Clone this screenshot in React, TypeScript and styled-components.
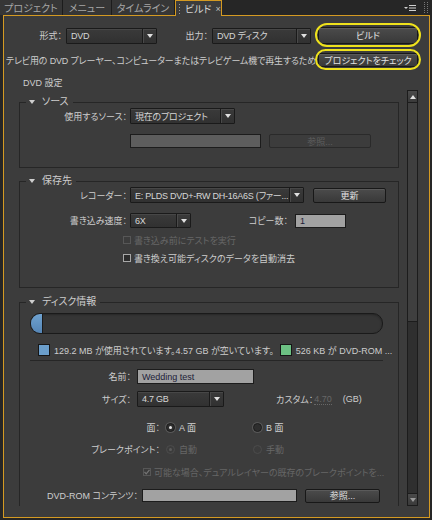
import React from 'react'
import styled, { createGlobalStyle, css } from 'styled-components'

const GlobalStyle = createGlobalStyle`
  html, body {
    margin: 0;
    padding: 0;
    background: #262626;
  }
  body {
    font-family: 'Liberation Sans', 'Noto Sans CJK JP', sans-serif;
    font-size: 9px;
    color: #cdcdcd;
    font-feature-settings: 'palt';
  }
`

const Window = styled.div`
  width: 432px;
  height: 520px;
  display: flex;
  flex-direction: column;
  background: #262626;
  overflow: hidden;
`

const TabBar = styled.div`
  height: 15px;
  display: flex;
  align-items: stretch;
  flex: none;
`

const Tab = styled.div<{ $w: number; $active?: boolean }>`
  width: ${(p) => p.$w}px;
  box-sizing: border-box;
  display: flex;
  align-items: center;
  justify-content: center;
  gap: 4px;
  background: #363636;
  border-right: 1px solid #1c1c1c;
  color: #a6a6a6;
  font-size: 10px;
  white-space: nowrap;

  ${(p) => p.$active && css`
    background: #3c3c3c;
    border: 1px solid #d49a22;
    border-bottom: none;
    margin-bottom: -1px;
    position: relative;
    z-index: 1;
    color: #d6d6d6;
    justify-content: flex-start;
    padding-left: 2px;
  `}
`

const TabClose = styled.span`
  color: #bdbdbd;
  font-size: 9px;
`

const TabSpacer = styled.div`
  flex: 1;
`

const TabTools = styled.div`
  display: flex;
  align-items: center;
  gap: 8px;
  padding-right: 4px;
`

const Panel = styled.div`
  margin: 0 2px 0 3px;
  height: 503px;
  box-sizing: border-box;
  border: 1px solid #d49a22;
  background: #3c3c3c;
  display: flex;
  flex-direction: column;
`

const TopRow = styled.div`
  display: flex;
  align-items: center;
  height: 17px;
  margin-top: 11px;
`

const DescRow = styled.div`
  display: flex;
  align-items: center;
  height: 16px;
  margin-top: 8px;
  padding-left: 2px;
`

const DescText = styled.span`
  flex: 1;
  min-width: 0;
  overflow: hidden;
  white-space: nowrap;
  letter-spacing: -0.15px;
`

const SectionTitle = styled.div`
  height: 12px;
  line-height: 12px;
  margin-top: 9px;
  padding-left: 19px;
`

const ScrollArea = styled.div`
  display: flex;
  height: 416px;
  margin-top: 1px;
`

const ScrollContent = styled.div`
  flex: 1;
  min-width: 0;
  overflow: hidden;
  padding: 6px 8px 0 15px;
`

const Scrollbar = styled.div`
  width: 11px;
  margin-right: 11px;
  box-sizing: border-box;
  border: 1px solid #1c1c1c;
  background: #2f2f2f;
  display: flex;
  flex-direction: column;
`

const ScrollButton = styled.div`
  height: 11px;
  flex: none;
  background: linear-gradient(#4a4a4a, #3a3a3a);
  display: flex;
  align-items: center;
  justify-content: center;
`

const ScrollThumb = styled.div`
  height: 220px;
  flex: none;
  box-sizing: border-box;
  background: #3f3f3f;
  border-top: 1px solid #1c1c1c;
  border-bottom: 1px solid #1c1c1c;
`

const ScrollTrack = styled.div`
  flex: 1;
  border-bottom: 1px solid #1c1c1c;
`

const Group = styled.fieldset<{ $mt?: number; $pb: number }>`
  margin: ${(p) => p.$mt ?? 0}px 0 0 0;
  padding: 0 0 ${(p) => p.$pb}px 0;
  border: 1px solid #262626;
  min-width: 0;
`

const GroupTitle = styled.legend`
  margin-left: 6px;
  padding: 0 4px 0 3px;
  height: 12px;
  line-height: 12px;
  font-size: 10px;
  white-space: nowrap;
`

const Caret = styled.span`
  display: inline-block;
  width: 0;
  height: 0;
  border-left: 3px solid transparent;
  border-right: 3px solid transparent;
  border-top: 4px solid #cfcfcf;
  margin-right: 7px;
  vertical-align: 1px;
`

const Row = styled.div<{ $mt?: number; $h: number; $pl?: number }>`
  display: flex;
  align-items: center;
  margin-top: ${(p) => p.$mt ?? 0}px;
  height: ${(p) => p.$h}px;
  padding-left: ${(p) => p.$pl ?? 0}px;
  white-space: nowrap;
`

const Label = styled.span<{ $w: number; $gap?: number; $ml?: number }>`
  width: ${(p) => p.$w}px;
  flex: none;
  text-align: right;
  margin-left: ${(p) => p.$ml ?? 0}px;
  margin-right: ${(p) => p.$gap ?? 3}px;
  white-space: nowrap;
`

const Select = styled.div<{ $w: number; $h?: number }>`
  width: ${(p) => p.$w}px;
  height: ${(p) => p.$h ?? 16}px;
  flex: none;
  box-sizing: border-box;
  display: flex;
  align-items: center;
  border: 1px solid #1a1a1a;
  border-radius: 1px;
  background: linear-gradient(#3a3a3a, #313131);
  box-shadow: inset 0 1px 0 #474747;
  color: #d6d6d6;
`

const SelectText = styled.span`
  flex: 1;
  min-width: 0;
  padding: 0 1px 0 4px;
  overflow: hidden;
  white-space: nowrap;
  letter-spacing: -0.25px;
`

const SelectArrow = styled.span`
  width: 14px;
  height: 100%;
  flex: none;
  box-sizing: border-box;
  border-left: 1px solid #1a1a1a;
  box-shadow: inset 1px 0 0 #4a4a4a;
  display: flex;
  align-items: center;
  justify-content: center;
`

const Triangle = styled.span<{ $up?: boolean; $dim?: boolean }>`
  width: 0;
  height: 0;
  border-left: 3px solid transparent;
  border-right: 3px solid transparent;
  ${(p) => p.$up
    ? css`border-bottom: 4px solid ${p.$dim ? '#9a9a9a' : '#e0e0e0'};`
    : css`border-top: 4px solid ${p.$dim ? '#9a9a9a' : '#e0e0e0'};`}
`

const Button = styled.div<{ $w: number; $h?: number; $ml?: number; $disabled?: boolean }>`
  width: ${(p) => p.$w}px;
  height: ${(p) => p.$h ?? 16}px;
  margin-left: ${(p) => p.$ml ?? 0}px;
  flex: none;
  box-sizing: border-box;
  display: flex;
  align-items: center;
  justify-content: center;
  border: 1px solid #181818;
  border-radius: 2px;
  background: linear-gradient(#4b4b4b, #393939);
  box-shadow: inset 0 1px 0 #5a5a5a;
  color: #e2e2e2;
  white-space: nowrap;

  ${(p) => p.$disabled && css`
    background: #3c3c3c;
    border-color: #2a2a2a;
    box-shadow: none;
    color: #5e5e5e;
  `}
`

const Highlight = styled.div<{ $ml?: number; $mr?: number }>`
  position: relative;
  margin-left: ${(p) => p.$ml ?? 0}px;
  margin-right: ${(p) => p.$mr ?? 0}px;
  flex: none;
`

const Ring = styled.span`
  position: absolute;
  inset: -4px -3px -3px -3px;
  border: 2px solid #efe21c;
  border-radius: 12px;
  pointer-events: none;
`

const Field = styled.div<{ $w: number; $h: number; $ml?: number; $dim?: boolean }>`
  width: ${(p) => p.$w}px;
  height: ${(p) => p.$h}px;
  margin-left: ${(p) => p.$ml ?? 0}px;
  flex: none;
  box-sizing: border-box;
  border: 1px solid #1c1c1c;
  background: ${(p) => (p.$dim ? '#5d5d5d' : '#a2a2a2')};
  color: #1d1d38;
  padding-left: 4px;
  display: flex;
  align-items: center;
`

const Check = styled.span<{ $disabled?: boolean }>`
  width: 8px;
  height: 8px;
  flex: none;
  box-sizing: border-box;
  border: 1px solid ${(p) => (p.$disabled ? '#575757' : '#a8a8a8')};
  background: ${(p) => (p.$disabled ? '#3c3c3c' : '#2c2c2c')};
  margin-right: 3px;
  display: flex;
  align-items: center;
  justify-content: center;
`

const Radio = styled.span<{ $disabled?: boolean; $on?: boolean }>`
  width: 9px;
  height: 9px;
  flex: none;
  box-sizing: border-box;
  border-radius: 50%;
  border: 1px solid ${(p) => (p.$disabled ? '#4c4c4c' : '#1c1c1c')};
  background: ${(p) => (p.$disabled ? '#3c3c3c' : '#2e2e2e')};
  box-shadow: ${(p) => (p.$disabled ? 'none' : '0 0 0 1px #575757')};
  margin-right: 4px;
  display: flex;
  align-items: center;
  justify-content: center;

  &::after {
    content: '';
    width: 3px;
    height: 3px;
    border-radius: 50%;
    background: ${(p) => (p.$disabled ? '#5a5a5a' : '#e6e6e6')};
    display: ${(p) => (p.$on ? 'block' : 'none')};
  }
`

const Option = styled.span<{ $w?: number; $disabled?: boolean }>`
  display: flex;
  align-items: center;
  width: ${(p) => (p.$w ? `${p.$w}px` : 'auto')};
  flex: none;
  color: ${(p) => (p.$disabled ? '#676767' : '#d2d2d2')};
`

const Dim = styled.span<{ $ml?: number; $underline?: boolean }>`
  color: #676767;
  margin-left: ${(p) => p.$ml ?? 0}px;
  ${(p) => p.$underline && css`
    border-bottom: 1px dotted #676767;
    line-height: 10px;
  `}
`

const Plain = styled.span<{ $ml?: number }>`
  margin-left: ${(p) => p.$ml ?? 0}px;
`

const Meter = styled.div`
  margin: 5px 15px 0 10px;
  height: 21px;
  box-sizing: border-box;
  border: 1px solid #1a1a1a;
  border-radius: 10px;
  background: #353535;
  box-shadow: inset 0 1px 2px #262626;
  overflow: hidden;
  display: flex;
`

const MeterFill = styled.div`
  height: 100%;
  box-sizing: border-box;
  background: linear-gradient(#6fa2d0, #5585b5);
  border-right: 1px solid #1a1a1a;
`

const UsageRow = styled.div`
  display: flex;
  align-items: center;
  height: 12px;
  margin: 10px 15px 0 18px;
  white-space: nowrap;
`

const Swatch = styled.span<{ $color: string; $ml?: number }>`
  width: 12px;
  height: 12px;
  flex: none;
  box-sizing: border-box;
  border: 1px solid #161616;
  background: ${(p) => p.$color};
  margin-left: ${(p) => p.$ml ?? 0}px;
  margin-right: 4px;
`

const Divider = styled.div`
  height: 1px;
  margin: 4px 15px 0 10px;
  background: #262626;
`

const Grip = () => (
  <svg width="3" height="10" viewBox="0 0 3 10">
    {[0, 3, 6, 9].map((y) => (
      <rect key={y} x="1" y={y} width="1" height="1" fill="#9a9a9a" />
    ))}
  </svg>
)

const PanelMenuIcon = () => (
  <svg width="12" height="8" viewBox="0 0 12 8">
    <path d="M0 3h4l-2 2z" fill="#d0d0d0" />
    <rect x="5" y="1" width="7" height="1" fill="#d0d0d0" />
    <rect x="5" y="3.5" width="7" height="1" fill="#d0d0d0" />
    <rect x="5" y="6" width="7" height="1" fill="#d0d0d0" />
  </svg>
)

const SideGrip = () => (
  <svg width="4" height="11" viewBox="0 0 4 11">
    {[0, 2, 4, 6, 8, 10].map((y) => (
      <React.Fragment key={y}>
        <rect x="0" y={y} width="1" height="1" fill="#777" />
        <rect x="3" y={y} width="1" height="1" fill="#777" />
      </React.Fragment>
    ))}
  </svg>
)

const CheckMark = () => (
  <svg width="6" height="6" viewBox="0 0 6 6">
    <path d="M0.5 3l1.7 1.8L5.5 0.8" stroke="#767676" strokeWidth="1.2" fill="none" />
  </svg>
)

const DropDown = ({ w, h, children }: { w: number; h?: number; children: React.ReactNode }) => (
  <Select $w={w} $h={h}>
    <SelectText>{children}</SelectText>
    <SelectArrow>
      <Triangle />
    </SelectArrow>
  </Select>
)

const METER_WIDTH = 353
const DISC_MB = 4700
const USED_MB = 129.2

export default function App() {
  const fillWidth = Math.round((METER_WIDTH * USED_MB) / DISC_MB) + 2

  return (
    <>
      <GlobalStyle />
      <Window>
        <TabBar>
          <Tab $w={63}>プロジェクト</Tab>
          <Tab $w={49}>メニュー</Tab>
          <Tab $w={63}>タイムライン</Tab>
          <Tab $w={47} $active>
            <Grip />
            ビルド
            <TabClose>×</TabClose>
          </Tab>
          <TabSpacer />
          <TabTools>
            <PanelMenuIcon />
            <SideGrip />
          </TabTools>
        </TabBar>

        <Panel>
          <TopRow>
            <Label $w={58} $gap={4}>形式：</Label>
            <DropDown w={91}>DVD</DropDown>
            <Label $w={51} $gap={4}>出力：</Label>
            <DropDown w={99}>DVD ディスク</DropDown>
            <Highlight $ml={7} $mr={10}>
              <Button $w={100} $h={17}>ビルド</Button>
              <Ring />
            </Highlight>
          </TopRow>

          <DescRow>
            <DescText>テレビ用の DVD プレーヤー、コンピューターまたはテレビゲーム機で再生するため</DescText>
            <Highlight $ml={3} $mr={11}>
              <Button $w={100} $h={14}>プロジェクトをチェック</Button>
              <Ring />
            </Highlight>
          </DescRow>

          <SectionTitle>DVD 設定</SectionTitle>

          <ScrollArea>
            <ScrollContent>
              <Group $pb={19}>
                <GroupTitle><Caret />ソース</GroupTitle>
                <Row $h={16}>
                  <Label $w={107}>使用するソース：</Label>
                  <DropDown w={105}>現在のプロジェクト</DropDown>
                </Row>
                <Row $h={14} $mt={10} $pl={110}>
                  <Field $w={131} $h={14} $dim />
                  <Button $w={102} $h={14} $ml={8} $disabled>参照...</Button>
                </Row>
              </Group>

              <Group $mt={7} $pb={23}>
                <GroupTitle><Caret />保存先</GroupTitle>
                <Row $h={16}>
                  <Label $w={107}>レコーダー：</Label>
                  <DropDown w={174}>E: PLDS DVD+-RW DH-16A6S (ファー...</DropDown>
                  <Button $w={73} $h={15} $ml={9}>更新</Button>
                </Row>
                <Row $h={15} $mt={10}>
                  <Label $w={107}>書き込み速度：</Label>
                  <DropDown w={61} h={15}>6X</DropDown>
                  <Label $w={97} $gap={7}>コピー数：</Label>
                  <Field $w={51} $h={14}>1</Field>
                </Row>
                <Row $h={12} $mt={6} $pl={103}>
                  <Check $disabled />
                  <Dim>書き込み前にテストを実行</Dim>
                </Row>
                <Row $h={12} $mt={6} $pl={103}>
                  <Check />
                  <span>書き換え可能ディスクのデータを自動消去</span>
                </Row>
              </Group>

              <Group $mt={8} $pb={10}>
                <GroupTitle><Caret />ディスク情報</GroupTitle>
                <Meter>
                  <MeterFill style={{ width: fillWidth }} />
                </Meter>
                <UsageRow>
                  <Swatch $color="#6b9ecb" />
                  <span>129.2 MB が使用されています。4.57 GB が空いています。</span>
                  <Swatch $color="#6cc183" $ml={6} />
                  <span>526 KB が DVD-ROM ...</span>
                </UsageRow>
                <Divider />
                <Row $h={15} $mt={8}>
                  <Label $w={111} $gap={6}>名前：</Label>
                  <Field $w={117} $h={15}>Wedding test</Field>
                </Row>
                <Row $h={16} $mt={7}>
                  <Label $w={111} $gap={6}>サイズ：</Label>
                  <DropDown w={87}>4.7 GB</DropDown>
                  <Plain $ml={52}>カスタム：</Plain>
                  <Dim $ml={1} $underline>4.70</Dim>
                  <Plain $ml={11}>(GB)</Plain>
                </Row>
                <Row $h={12} $mt={14}>
                  <Label $w={140} $gap={6}>面：</Label>
                  <Option $w={87}><Radio $on />A 面</Option>
                  <Option><Radio />B 面</Option>
                </Row>
                <Row $h={12} $mt={10}>
                  <Label $w={140} $gap={6}>ブレークポイント：</Label>
                  <Option $w={87} $disabled><Radio $disabled $on />自動</Option>
                  <Option $disabled><Radio $disabled />手動</Option>
                </Row>
                <Row $h={12} $mt={11} $pl={123}>
                  <Check $disabled><CheckMark /></Check>
                  <Dim>可能な場合、デュアルレイヤーの既存のブレークポイントを...</Dim>
                </Row>
                <Row $h={13} $mt={11}>
                  <Label $w={118} $gap={4}>DVD-ROM コンテンツ：</Label>
                  <Field $w={155} $h={13} />
                  <Button $w={75} $h={14} $ml={8}>参照...</Button>
                </Row>
                <Row $h={40} />
              </Group>
            </ScrollContent>

            <Scrollbar>
              <ScrollButton><Triangle $up /></ScrollButton>
              <ScrollThumb />
              <ScrollTrack />
              <ScrollButton><Triangle $dim /></ScrollButton>
            </Scrollbar>
          </ScrollArea>
        </Panel>
      </Window>
    </>
  )
}
